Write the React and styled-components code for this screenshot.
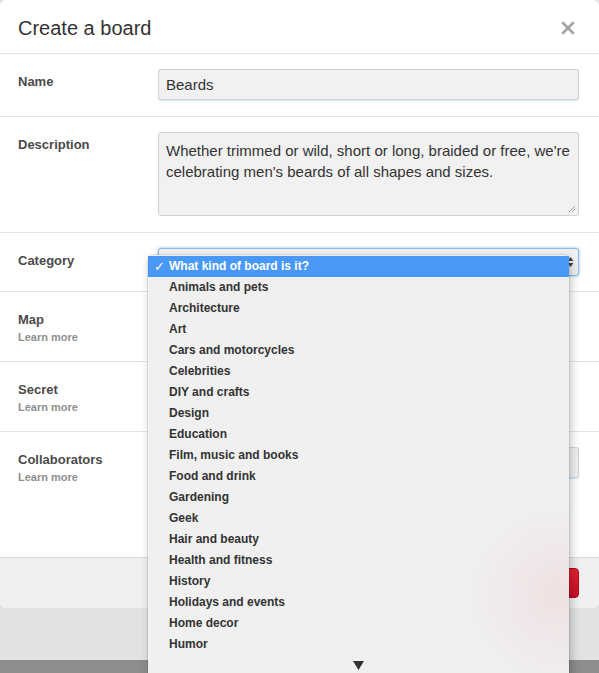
import React from "react";
import styled, { createGlobalStyle } from "styled-components";

const Global = createGlobalStyle`
  html, body { margin: 0; padding: 0; }
  *, *::before, *::after { box-sizing: border-box; }
  body {
    background: #e1e2e2;
    font-family: "Liberation Sans", Arial, Helvetica, sans-serif;
    color: #333;
    overflow: hidden;
  }
`;

const Page = styled.div`
  width: 599px;
  height: 673px;
  display: flex;
  flex-direction: column;
  overflow: hidden;
  position: relative;
`;

const Modal = styled.div`
  background: #fff;
  border-radius: 6px;
  display: flex;
  flex-direction: column;
  position: relative;
  z-index: 1;
`;

const Header = styled.div`
  height: 54px;
  display: flex;
  align-items: center;
  justify-content: space-between;
  padding: 0 22px 0 18px;
  border-bottom: 1px solid #e4e4e4;
`;

const Title = styled.h1`
  margin: 0;
  font-size: 20px;
  font-weight: normal;
  color: #333;
  padding-top: 3px;
`;

const Close = styled.button`
  border: 0;
  background: none;
  padding: 0;
  width: 16px;
  height: 16px;
  display: flex;
  margin-top: 4px;
`;

const Row = styled.div`
  display: grid;
  grid-template-columns: 140px 1fr;
  padding: 15px 20px 16px 18px;
  min-height: ${(p) => p.$min || 0}px;
  border-bottom: ${(p) => (p.$last ? "0" : "1px solid #e4e4e4")};
  align-items: start;
`;

const LabelBox = styled.div`
  padding-top: 4px;
  display: flex;
  flex-direction: column;
`;

const Label = styled.span`
  font-size: 13px;
  font-weight: bold;
  line-height: 18px;
  color: #4a4a4a;
`;

const Learn = styled.span`
  font-size: 11px;
  font-weight: bold;
  line-height: 16px;
  color: #8f8f8f;
`;

const Input = styled.div`
  height: 31px;
  background: #f1f1f1;
  border: 1px solid #d2d2d2;
  border-bottom-color: #c9d6e0;
  border-radius: 3px;
  box-shadow: 0 1px 1px rgba(150, 180, 210, 0.35);
  font-size: 15px;
  line-height: 29px;
  padding: 0 7px;
  color: #333;
`;

const TextArea = styled.div`
  height: 84px;
  background: #f1f1f1;
  border: 1px solid #d2d2d2;
  border-radius: 3px;
  font-size: 15px;
  line-height: 21px;
  padding: 7px 7px;
  color: #333;
  position: relative;
`;

const Grip = styled.svg`
  position: absolute;
  right: 2px;
  bottom: 2px;
`;

const SelectWrap = styled.div`
  position: relative;
`;

const Select = styled.div`
  height: 28px;
  background: #eef0f2;
  border: 1px solid #8fbbe4;
  border-radius: 3px;
  box-shadow: 0 0 3px rgba(90, 150, 220, 0.7);
  display: flex;
  justify-content: flex-end;
  align-items: center;
  padding-right: 4px;
  margin-bottom: -1px;
`;

const Menu = styled.div`
  position: absolute;
  left: -10px;
  top: 7px;
  width: 421px;
  height: 430px;
  background:
    radial-gradient(circle at 410px 340px, rgba(235, 40, 60, 0.08) 0, rgba(235, 40, 60, 0.04) 45px, rgba(235, 40, 60, 0) 95px),
    #f0f0f0;
  border-radius: 5px 5px 0 0;
  box-shadow: 0 0 0 1px rgba(0, 0, 0, 0.08), 2px 4px 10px rgba(0, 0, 0, 0.25);
  padding-top: 1px;
  z-index: 5;
`;

const Item = styled.div`
  height: 21px;
  line-height: 21px;
  font-size: 12px;
  font-weight: bold;
  padding-left: 21px;
  position: relative;
  color: ${(p) => (p.$active ? "#fff" : "#333")};
  background: ${(p) => (p.$active ? "#4a98f5" : "transparent")};
`;

const Check = styled.span`
  position: absolute;
  left: 6px;
  top: 0;
  font-size: 13px;
  font-family: "DejaVu Sans", sans-serif;
`;

const More = styled.div`
  display: flex;
  justify-content: center;
  padding-top: 6px;
`;

const Footer = styled.div`
  height: 51px;
  background: #f0f0f0;
  border-top: 1px solid #dcdcdc;
  border-radius: 0 0 6px 6px;
  display: flex;
  justify-content: flex-end;
  align-items: center;
  padding: 0 20px;
`;

const RedButton = styled.button`
  width: 70px;
  height: 30px;
  border: 1px solid #b5081f;
  border-radius: 4px;
  background: linear-gradient(#e0202f, #c8102a);
  color: #fff;
  font-weight: bold;
  font-size: 14px;
  font-family: inherit;
`;

const Backdrop = styled.div`
  height: 52px;
  background: #e1e2e2;
`;

const Dark = styled.div`
  flex: 1;
  background: #8d8d8d;
`;

const categories = [
  "Animals and pets",
  "Architecture",
  "Art",
  "Cars and motorcycles",
  "Celebrities",
  "DIY and crafts",
  "Design",
  "Education",
  "Film, music and books",
  "Food and drink",
  "Gardening",
  "Geek",
  "Hair and beauty",
  "Health and fitness",
  "History",
  "Holidays and events",
  "Home decor",
  "Humor",
];

export default function App() {
  return (
    <>
      <Global />
      <Page>
        <Modal>
          <Header>
            <Title>Create a board</Title>
            <Close aria-label="Close">
              <svg width="14" height="14" viewBox="0 0 14 14">
                <path d="M2 2 L12 12 M12 2 L2 12" stroke="#a3a3a3" strokeWidth="2.6" strokeLinecap="round" />
              </svg>
            </Close>
          </Header>
          <Row>
            <LabelBox><Label>Name</Label></LabelBox>
            <Input>Beards</Input>
          </Row>
          <Row>
            <LabelBox><Label>Description</Label></LabelBox>
            <TextArea>
              Whether trimmed or wild, short or long, braided or free, we're celebrating men's beards of all shapes and sizes.
              <Grip width="8" height="8" viewBox="0 0 8 8">
                <path d="M7 1 L1 7 M7 4 L4 7" stroke="#888" strokeWidth="0.8" />
              </Grip>
            </TextArea>
          </Row>
          <Row>
            <LabelBox><Label>Category</Label></LabelBox>
            <SelectWrap>
              <Select>
                <svg width="7" height="12" viewBox="0 0 7 12">
                  <path d="M0.5 5 L3.5 1 L6.5 5 Z M0.5 7 L3.5 11 L6.5 7 Z" fill="#444" />
                </svg>
              </Select>
              <Menu>
                <Item $active>
                  <Check>✓</Check>What kind of board is it?
                </Item>
                {categories.map((c) => (
                  <Item key={c}>{c}</Item>
                ))}
                <More>
                  <svg width="11" height="9" viewBox="0 0 11 9">
                    <path d="M0 0 L11 0 L5.5 9 Z" fill="#333" />
                  </svg>
                </More>
              </Menu>
            </SelectWrap>
          </Row>
          <Row $min={70}>
            <LabelBox>
              <Label>Map</Label>
              <Learn>Learn more</Learn>
            </LabelBox>
          </Row>
          <Row $min={70}>
            <LabelBox>
              <Label>Secret</Label>
              <Learn>Learn more</Learn>
            </LabelBox>
          </Row>
          <Row $min={125} $last>
            <LabelBox>
              <Label>Collaborators</Label>
              <Learn>Learn more</Learn>
            </LabelBox>
            <Input />
          </Row>
          <Footer>
            <RedButton>Create</RedButton>
          </Footer>
        </Modal>
        <Backdrop />
        <Dark />
      </Page>
    </>
  );
}
